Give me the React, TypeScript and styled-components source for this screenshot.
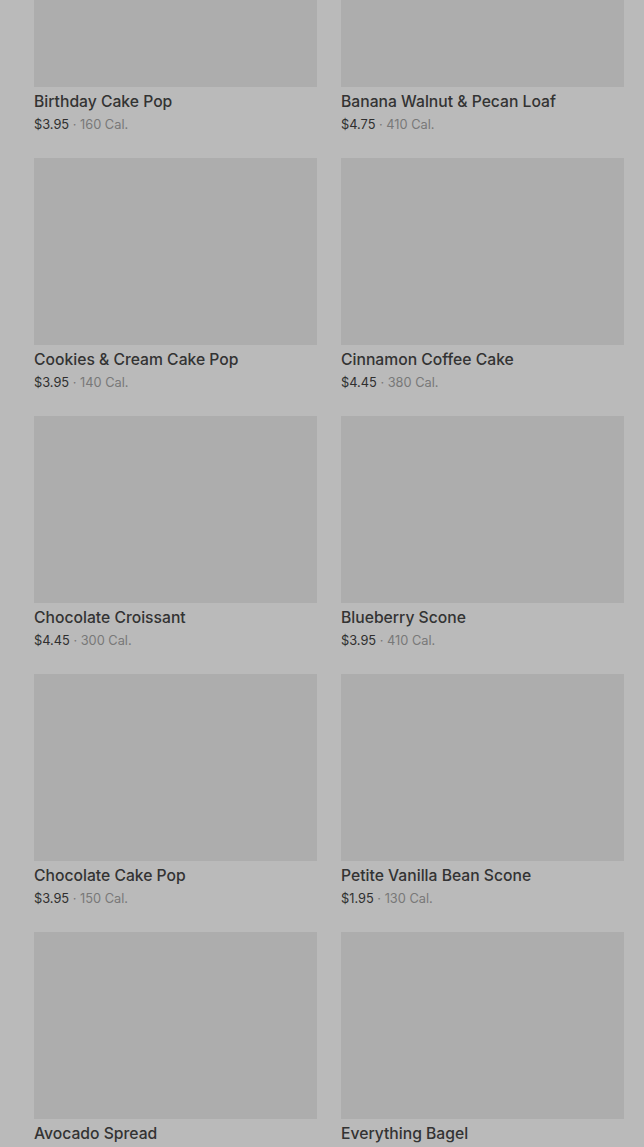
import styled, { createGlobalStyle } from "styled-components";

interface Item {
  name: string;
  price: string;
  cal: number;
}

const items: Item[] = [
  { name: "Birthday Cake Pop", price: "$3.95", cal: 160 },
  { name: "Banana Walnut & Pecan Loaf", price: "$4.75", cal: 410 },
  { name: "Cookies & Cream Cake Pop", price: "$3.95", cal: 140 },
  { name: "Cinnamon Coffee Cake", price: "$4.45", cal: 380 },
  { name: "Chocolate Croissant", price: "$4.45", cal: 300 },
  { name: "Blueberry Scone", price: "$3.95", cal: 410 },
  { name: "Chocolate Cake Pop", price: "$3.95", cal: 150 },
  { name: "Petite Vanilla Bean Scone", price: "$1.95", cal: 130 },
  { name: "Avocado Spread", price: "$3.95", cal: 60 },
  { name: "Everything Bagel", price: "$1.95", cal: 290 },
];

export default function App() {
  return (
    <>
      <GlobalStyle />
      <Page>
        <Grid>
          {items.map((item) => (
            <Card key={item.name}>
              <Thumb />
              <Title>{item.name}</Title>
              <Meta>
                {item.price}
                <Cal> · {item.cal} Cal.</Cal>
              </Meta>
            </Card>
          ))}
        </Grid>
      </Page>
    </>
  );
}

const GlobalStyle = createGlobalStyle`
  html, body {
    margin: 0;
    background: #bababa;
    overflow: hidden;
  }
  body {
    font-family: Inter, "Noto Sans", sans-serif;
  }
`;

const Page = styled.div`
  height: 1147px;
  overflow: hidden;
  background: #bababa;
  padding: 0 20px 0 34px;
`;

const Grid = styled.div`
  display: grid;
  grid-template-columns: 283px 283px;
  column-gap: 24px;
  row-gap: 23px;
  margin-top: -100px;
`;

const Card = styled.div`
  display: flex;
  flex-direction: column;
`;

const Thumb = styled.div`
  height: 187px;
  background: #adadad;
`;

const Title = styled.div`
  margin-top: 5px;
  font-size: 15.7px;
  line-height: 20px;
  font-weight: 500;
  color: #333333;
  white-space: nowrap;
`;

const Meta = styled.div`
  margin-top: 3px;
  font-size: 12.8px;
  line-height: 20px;
  color: #2f2f2f;
`;

const Cal = styled.span`
  color: #787878;
`;
